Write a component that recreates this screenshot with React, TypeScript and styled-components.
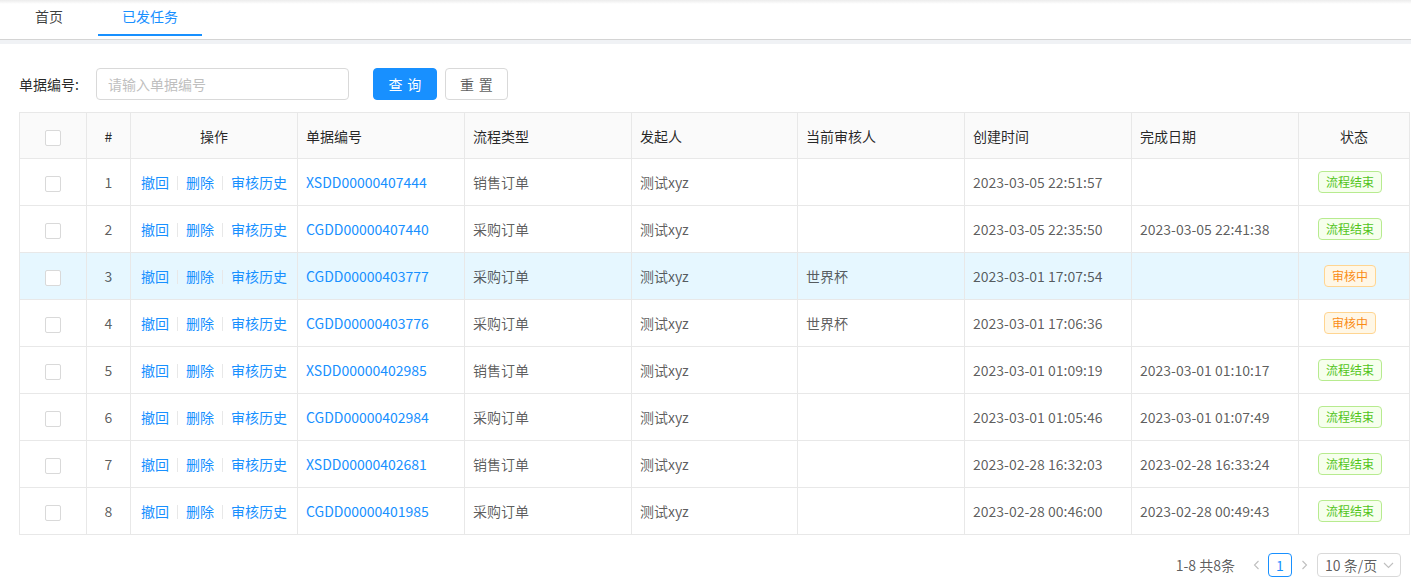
import React from 'react';
import styled, { createGlobalStyle } from 'styled-components';

const GlobalStyle = createGlobalStyle`
  html, body {
    margin: 0;
    padding: 0;
    background: #fff;
  }
  body {
    font-family: "Noto Sans CJK SC", "Noto Sans", sans-serif;
    font-size: 14px;
    color: rgba(0, 0, 0, 0.65);
  }
  * { box-sizing: border-box; }
`;

type Status = 'done' | 'pending';

interface Row {
  no: number;
  code: string;
  type: string;
  starter: string;
  reviewer: string;
  created: string;
  finished: string;
  status: Status;
}

const rows: Row[] = [
  { no: 1, code: 'XSDD00000407444', type: '销售订单', starter: '测试xyz', reviewer: '', created: '2023-03-05 22:51:57', finished: '', status: 'done' },
  { no: 2, code: 'CGDD00000407440', type: '采购订单', starter: '测试xyz', reviewer: '', created: '2023-03-05 22:35:50', finished: '2023-03-05 22:41:38', status: 'done' },
  { no: 3, code: 'CGDD00000403777', type: '采购订单', starter: '测试xyz', reviewer: '世界杯', created: '2023-03-01 17:07:54', finished: '', status: 'pending' },
  { no: 4, code: 'CGDD00000403776', type: '采购订单', starter: '测试xyz', reviewer: '世界杯', created: '2023-03-01 17:06:36', finished: '', status: 'pending' },
  { no: 5, code: 'XSDD00000402985', type: '销售订单', starter: '测试xyz', reviewer: '', created: '2023-03-01 01:09:19', finished: '2023-03-01 01:10:17', status: 'done' },
  { no: 6, code: 'CGDD00000402984', type: '采购订单', starter: '测试xyz', reviewer: '', created: '2023-03-01 01:05:46', finished: '2023-03-01 01:07:49', status: 'done' },
  { no: 7, code: 'XSDD00000402681', type: '销售订单', starter: '测试xyz', reviewer: '', created: '2023-02-28 16:32:03', finished: '2023-02-28 16:33:24', status: 'done' },
  { no: 8, code: 'CGDD00000401985', type: '采购订单', starter: '测试xyz', reviewer: '', created: '2023-02-28 00:46:00', finished: '2023-02-28 00:49:43', status: 'done' },
];

const colWidths = [67, 44, 167, 167, 167, 166, 167, 167, 167, 111];

const TabBar = styled.div`
  display: flex;
  height: 40px;
  border-bottom: 1px solid #d4d4d4;
  background: linear-gradient(#ececec 0px, #fff 4px);
`;

const Tab = styled.div<{ $active?: boolean; $width: number }>`
  width: ${(p) => p.$width}px;
  height: 36px;
  display: flex;
  align-items: center;
  justify-content: center;
  padding-bottom: 2px;
  color: ${(p) => (p.$active ? '#1890ff' : 'rgba(0,0,0,0.75)')};
  border-bottom: 2px solid ${(p) => (p.$active ? '#1890ff' : 'transparent')};
  cursor: pointer;
`;

const TabGap = styled.div`
  height: 4px;
  background: #f0f2f5;
`;

const Content = styled.div`
  padding: 24px 0 0 19px;
`;

const SearchRow = styled.div`
  display: flex;
  align-items: center;
  height: 32px;
  margin-bottom: 12px;
`;

const Label = styled.label`
  color: rgba(0, 0, 0, 0.85);
  width: 77px;
`;

const Input = styled.input`
  width: 253px;
  height: 32px;
  border: 1px solid #d9d9d9;
  border-radius: 4px;
  padding: 0 11px;
  font-family: inherit;
  font-size: 14px;
  color: rgba(0, 0, 0, 0.65);
  outline: none;
  &::placeholder {
    color: #bfbfbf;
  }
`;

const Button = styled.button<{ $primary?: boolean }>`
  height: 32px;
  width: ${(p) => (p.$primary ? 64 : 63)}px;
  margin-left: ${(p) => (p.$primary ? 24 : 8)}px;
  border-radius: 4px;
  border: 1px solid ${(p) => (p.$primary ? '#1890ff' : '#d9d9d9')};
  background: ${(p) => (p.$primary ? '#1890ff' : '#fff')};
  color: ${(p) => (p.$primary ? '#fff' : 'rgba(0,0,0,0.65)')};
  font-family: inherit;
  font-size: 14px;
  letter-spacing: 0.34em;
  text-indent: 0.34em;
  padding: 0;
  cursor: pointer;
`;

const Table = styled.table`
  width: 1391px;
  border-collapse: collapse;
  table-layout: fixed;
`;

const Th = styled.th<{ $center?: boolean }>`
  height: 46px;
  padding: 0 8px;
  background: #fafafa;
  border: 1px solid #e8e8e8;
  color: rgba(0, 0, 0, 0.85);
  font-weight: 400;
  text-align: ${(p) => (p.$center ? 'center' : 'left')};
`;

const Tr = styled.tr<{ $highlight?: boolean }>`
  background: ${(p) => (p.$highlight ? '#e6f7ff' : '#fff')};
`;

const Td = styled.td<{ $center?: boolean }>`
  height: 47px;
  padding: 0 8px;
  border: 1px solid #e8e8e8;
  text-align: ${(p) => (p.$center ? 'center' : 'left')};
  white-space: nowrap;
  color: rgba(0, 0, 0, 0.65);
`;

const Checkbox = styled.span`
  display: inline-block;
  width: 16px;
  height: 16px;
  border: 1px solid #d9d9d9;
  border-radius: 2px;
  background: #fff;
  vertical-align: middle;
`;

const Link = styled.a`
  color: #1890ff;
  text-decoration: none;
  cursor: pointer;
`;

const Divider = styled.span`
  display: inline-block;
  width: 1px;
  height: 14px;
  margin: 0 8px;
  background: #e8e8e8;
  vertical-align: middle;
  position: relative;
  top: -1px;
`;

const Tag = styled.span<{ $status: Status }>`
  display: inline-block;
  height: 22px;
  line-height: 20px;
  padding: 0 7px;
  margin-right: 8px;
  font-size: 12px;
  border-radius: 4px;
  border: 1px solid ${(p) => (p.$status === 'done' ? '#b7eb8f' : '#ffd591')};
  background: ${(p) => (p.$status === 'done' ? '#f6ffed' : '#fff7e6')};
  color: ${(p) => (p.$status === 'done' ? '#52c41a' : '#fa8c16')};
`;

const Pager = styled.div`
  display: flex;
  align-items: center;
  justify-content: flex-end;
  width: 1391px;
  padding-right: 9px;
  margin-top: 18px;
  height: 24px;
`;

const Total = styled.span`
  margin-right: 10px;
`;

const Arrow = styled.span`
  width: 22px;
  height: 24px;
  display: flex;
  align-items: center;
  justify-content: center;
  color: #bfbfbf;
`;

const PageItem = styled.span`
  width: 24px;
  height: 24px;
  border: 1px solid #1890ff;
  border-radius: 4px;
  color: #1890ff;
  display: flex;
  align-items: center;
  justify-content: center;
  margin: 0 1px;
`;

const SizeSelect = styled.div`
  margin-left: 2px;
  width: 84px;
  height: 24px;
  border: 1px solid #d9d9d9;
  border-radius: 4px;
  display: flex;
  align-items: center;
  justify-content: space-between;
  padding: 0 6px 0 7px;
`;

const SelectArrow = styled.span`
  display: flex;
  color: #bfbfbf;
`;

const Chevron = ({ dir }: { dir: 'left' | 'right' | 'down' }) => {
  const d = dir === 'left' ? 'M6.5 1 L2.5 5 L6.5 9' : dir === 'right' ? 'M2.5 1 L6.5 5 L2.5 9' : 'M1 3 L5.5 7.5 L10 3';
  const w = dir === 'down' ? 11 : 9;
  return (
    <svg width={w} height="10" viewBox={`0 0 ${w} 10`} fill="none" stroke="currentColor" strokeWidth="1.1">
      <path d={d} />
    </svg>
  );
};

const headers = ['', '#', '操作', '单据编号', '流程类型', '发起人', '当前审核人', '创建时间', '完成日期', '状态'];
const centered = [0, 1, 2, 9];

export default function App() {
  return (
    <>
      <GlobalStyle />
      <TabBar>
        <Tab $width={98}>首页</Tab>
        <Tab $width={104} $active>已发任务</Tab>
      </TabBar>
      <TabGap />
      <Content>
        <SearchRow>
          <Label>单据编号:</Label>
          <Input placeholder="请输入单据编号" />
          <Button $primary>查询</Button>
          <Button>重置</Button>
        </SearchRow>
        <Table>
          <colgroup>
            {colWidths.map((w, i) => (
              <col key={i} style={{ width: w }} />
            ))}
          </colgroup>
          <thead>
            <tr>
              {headers.map((h, i) => (
                <Th key={i} $center={centered.includes(i)}>
                  {i === 0 ? <Checkbox /> : h}
                </Th>
              ))}
            </tr>
          </thead>
          <tbody>
            {rows.map((r) => (
              <Tr key={r.no} $highlight={r.no === 3}>
                <Td $center>
                  <Checkbox />
                </Td>
                <Td $center>{r.no}</Td>
                <Td $center>
                  <Link>撤回</Link>
                  <Divider />
                  <Link>删除</Link>
                  <Divider />
                  <Link>审核历史</Link>
                </Td>
                <Td>
                  <Link>{r.code}</Link>
                </Td>
                <Td>{r.type}</Td>
                <Td>{r.starter}</Td>
                <Td>{r.reviewer}</Td>
                <Td>{r.created}</Td>
                <Td>{r.finished}</Td>
                <Td $center>
                  <Tag $status={r.status}>{r.status === 'done' ? '流程结束' : '审核中'}</Tag>
                </Td>
              </Tr>
            ))}
          </tbody>
        </Table>
        <Pager>
          <Total>1-8 共8条</Total>
          <Arrow>
            <Chevron dir="left" />
          </Arrow>
          <PageItem>1</PageItem>
          <Arrow>
            <Chevron dir="right" />
          </Arrow>
          <SizeSelect>
            <span>10 条/页</span>
            <SelectArrow>
              <Chevron dir="down" />
            </SelectArrow>
          </SizeSelect>
        </Pager>
      </Content>
    </>
  );
}
